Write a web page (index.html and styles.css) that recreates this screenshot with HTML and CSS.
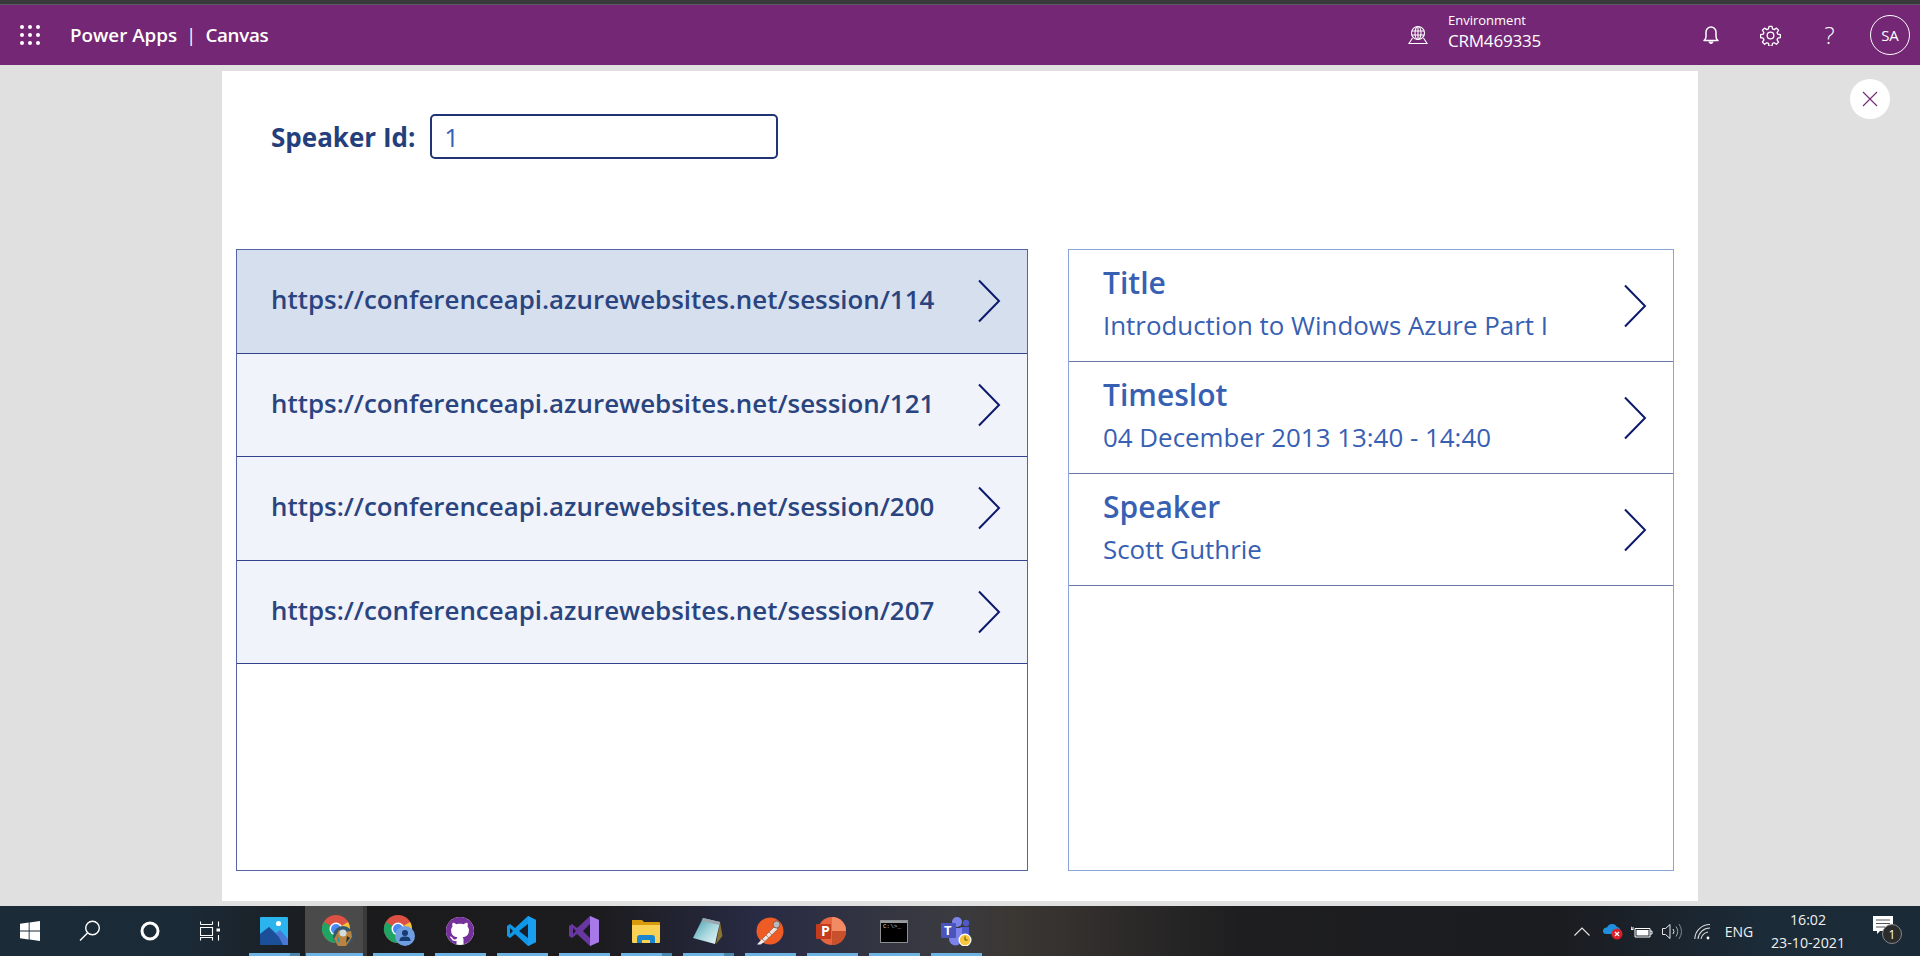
FILE: index.html
```html
<!DOCTYPE html>
<html lang="en">
<head>
<meta charset="utf-8">
<title>Power Apps | Canvas</title>
<link rel="stylesheet" href="styles.css">
</head>
<body>
<div class="app">
  <div class="chrome-strip"></div>
  <header class="topbar">
    <svg class="waffle" viewBox="0 0 20 20" width="20" height="20"><g fill="#fff"><circle cx="2" cy="2" r="2"/><circle cx="10" cy="2" r="2"/><circle cx="18" cy="2" r="2"/><circle cx="2" cy="10" r="2"/><circle cx="10" cy="10" r="2"/><circle cx="18" cy="10" r="2"/><circle cx="2" cy="18" r="2"/><circle cx="10" cy="18" r="2"/><circle cx="18" cy="18" r="2"/></g></svg>
    <div class="brand"><span>Power Apps</span><span class="brand-sep">|</span><span class="brand-sub">Canvas</span></div>
    <div class="env">
      <svg class="env-icon" viewBox="0 0 20 20" width="20" height="20" fill="none" stroke="#fff" stroke-width="1.1"><circle cx="10" cy="8" r="6.5"/><ellipse cx="10" cy="8" rx="3" ry="6.5"/><path d="M3.5 6h13M3.5 10h13M10 1.500v13"/><path d="M4.500 13 1 18.500h18L15.500 13"/></svg>
      <div class="env-text"><div class="env-label">Environment</div><div class="env-name">CRM469335</div></div>
    </div>
    <div class="top-icons">
      <svg class="bell" viewBox="0 0 20 22" width="20" height="22" fill="none" stroke="#fff" stroke-width="1.5"><path d="M3 16.500c1.500-1 2-2 2-4V8a5 5 0 0 1 10 0v4.500c0 2 .5 3 2 4z" stroke-linejoin="round"/><path d="M8 17.500a2 2 0 0 0 4 0" fill="#fff" stroke-width="1"/></svg>
      <svg viewBox="0 0 24 24" width="21" height="21" fill="none" stroke="#fff" stroke-width="1.500"><path d="M10.300 1.500h3.400l.6 3 1.900.8 2.600-1.700 2.400 2.400-1.700 2.600.8 1.900 3 .6v3.400l-3 .6-.8 1.900 1.700 2.600-2.400 2.400-2.600-1.700-1.900.8-.6 3h-3.400l-.6-3-1.900-.8-2.600 1.700-2.400-2.400 1.700-2.600-.8-1.900-3-.6v-3.400l3-.6.8-1.900-1.700-2.600 2.400-2.400 2.600 1.700 1.900-.8z" stroke-linejoin="round"/><circle cx="12" cy="12" r="3.800"/></svg>
      <span class="help">?</span>
      <span class="avatar">SA</span>
    </div>
  </header>
  <main class="stage">
    <section class="card">
      <div class="form-row">
        <label class="field-label">Speaker Id:</label>
        <div class="field-input">1</div>
      </div>
      <div class="panels">
        <div class="list">
          <div class="list-row selected"><span class="url">https://conferenceapi.azurewebsites.net/session/114</span><svg class="chev" viewBox="0 0 24 44" width="24" height="44"><path d="M2 1.500 22 22 2 42.500"/></svg></div>
          <div class="list-row"><span class="url">https://conferenceapi.azurewebsites.net/session/121</span><svg class="chev" viewBox="0 0 24 44" width="24" height="44"><path d="M2 1.500 22 22 2 42.500"/></svg></div>
          <div class="list-row"><span class="url">https://conferenceapi.azurewebsites.net/session/200</span><svg class="chev" viewBox="0 0 24 44" width="24" height="44"><path d="M2 1.500 22 22 2 42.500"/></svg></div>
          <div class="list-row"><span class="url">https://conferenceapi.azurewebsites.net/session/207</span><svg class="chev" viewBox="0 0 24 44" width="24" height="44"><path d="M2 1.500 22 22 2 42.500"/></svg></div>
        </div>
        <div class="detail">
          <div class="detail-row"><div class="detail-text"><div class="detail-title">Title</div><div class="detail-value">Introduction to Windows Azure Part I</div></div><svg class="chev" viewBox="0 0 24 44" width="24" height="44"><path d="M2 1.500 22 22 2 42.500"/></svg></div>
          <div class="detail-row"><div class="detail-text"><div class="detail-title">Timeslot</div><div class="detail-value">04 December 2013 13:40 - 14:40</div></div><svg class="chev" viewBox="0 0 24 44" width="24" height="44"><path d="M2 1.500 22 22 2 42.500"/></svg></div>
          <div class="detail-row"><div class="detail-text"><div class="detail-title">Speaker</div><div class="detail-value">Scott Guthrie</div></div><svg class="chev" viewBox="0 0 24 44" width="24" height="44"><path d="M2 1.500 22 22 2 42.500"/></svg></div>
        </div>
      </div>
    </section>
    <button class="close" aria-label="Close"><svg viewBox="0 0 16 16" width="16" height="16" fill="none" stroke="#742774" stroke-width="1.100"><path d="M1 1l14 14M15 1 1 15"/></svg></button>
  </main>
  <footer class="taskbar">
    <div class="tb-sys">
      <div class="sys"><svg viewBox="0 0 20 20" width="20" height="20" fill="#fff"><path d="M0 2.800 8.700 1.600v8H0zM9.600 1.500 20 0v9.600H9.600zM0 10.500h8.700v8L0 17.200zM9.600 10.500H20V20L9.600 18.500z"/></svg></div>
      <div class="sys"><svg viewBox="0 0 22 22" width="22" height="22" fill="none" stroke="#fff" stroke-width="1.400"><circle cx="13.500" cy="8" r="6.800"/><path d="M8.500 13 1 20.500"/></svg></div>
      <div class="sys"><svg viewBox="0 0 20 20" width="20" height="20" fill="none" stroke="#fff" stroke-width="3"><circle cx="10" cy="10" r="8"/></svg></div>
      <div class="sys"><svg viewBox="0 0 20 20" width="20" height="20" fill="none" stroke="#fff" stroke-width="1.100"><path d="M.5 3.500V.5M12.500.5v3M.5 3.500h12M.5 6.500h12v8H.5zM.5 19.500v-3h12v3M18.500.5v5M18.500 14v5.500"/><rect x="16.500" y="7.500" width="4" height="3" fill="#fff" stroke="none"/></svg></div>
    </div>
    <div class="tb-apps">
      <div class="app-item stacked"><svg viewBox="0 0 28 28" width="28" height="28"><rect width="28" height="28" rx="1" fill="#2bb3ee"/><circle cx="18.500" cy="6.500" r="2.600" fill="#fff"/><path d="M0 28V17l9-7 7 6 4-3 8 9v6z" fill="#4a78d6"/><path d="M0 28V17l9-7 10 10 4 8z" fill="#1b4f97"/></svg></div>
      <div class="app-item active stacked"><svg viewBox="-4 -2 36 36" width="36" height="36"><circle cx="14" cy="14" r="14" fill="#dd5144"/><path d="M14 14 26.100 7A14 14 0 0 1 16 27.900z" fill="#f5c33b"/><path d="M14 14 16 27.900A14 14 0 0 1 1.900 7z" fill="#1fa463"/><circle cx="14" cy="14" r="6.500" fill="#fff"/><circle cx="14" cy="14" r="5" fill="#4a8af4"/><circle cx="21" cy="21" r="10" fill="#35586e"/><path d="M12 24l5-9 6 2 6-1 1 6-6 9-8 0z" fill="#b8843f"/><circle cx="21" cy="18" r="3.500" fill="#d3dcdf"/><path d="M15 20l3 5-2 3z" fill="#2b8fb8"/><path d="M25 21l3 2-4 5z" fill="#22313a"/></svg></div>
      <div class="app-item"><svg viewBox="-4 -2 36 36" width="36" height="36"><circle cx="14" cy="14" r="14" fill="#dd5144"/><path d="M14 14 26.100 7A14 14 0 0 1 16 27.900z" fill="#f5c33b"/><path d="M14 14 16 27.900A14 14 0 0 1 1.900 7z" fill="#1fa463"/><circle cx="14" cy="14" r="6.500" fill="#fff"/><circle cx="14" cy="14" r="5" fill="#4a8af4"/><circle cx="21" cy="21" r="10" fill="#6f9fe0"/><circle cx="21" cy="18" r="3" fill="#173b73"/><path d="M15.500 26c0-3.500 2-4.500 5.500-4.500s5.500 1 5.500 4.500z" fill="#173b73"/></svg></div>
      <div class="app-item"><svg viewBox="0 0 16 16" width="28" height="28"><circle cx="8" cy="8" r="8" fill="#fff"/><path fill="#76309b" d="M8 0C3.580 0 0 3.580 0 8c0 3.540 2.290 6.530 5.470 7.590.4.070.55-.17.55-.38 0-.19-.01-.82-.01-1.490-2.010.37-2.530-.49-2.690-.94-.09-.23-.48-.94-.82-1.130-.28-.15-.68-.52-.01-.53.63-.01 1.080.58 1.230.82.72 1.210 1.870.87 2.330.66.070-.52.28-.87.51-1.070-1.780-.2-3.640-.89-3.640-3.950 0-.87.31-1.590.82-2.150-.08-.2-.36-1.020.08-2.120 0 0 .67-.21 2.200.82.64-.18 1.320-.27 2-.27.68 0 1.360.09 2 .27 1.530-1.040 2.200-.82 2.200-.82.44 1.100.16 1.920.08 2.120.51.56.82 1.270.82 2.150 0 3.070-1.870 3.750-3.650 3.950.29.25.54.73.54 1.480 0 1.070-.01 1.930-.01 2.200 0 .21.15.46.55.38A8.013 8.013 0 0 0 16 8c0-4.420-3.580-8-8-8z"/></svg></div>
      <div class="app-item"><svg viewBox="0 0 30 30" width="30" height="30"><path d="M21 0l8 4v22l-8 4L8 18l-5 4-3-2V10l3-2 5 4z" fill="#0f97e8"/><path d="M21 8v14l-9-7z" fill="#17202b"/><path d="M3 12v6l3-3z" fill="#17202b"/><path d="M21 0l8 4v22l-8 4z" fill="#1a9ff0"/><path d="M21 8v14l-6-7z" fill="#17202b"/></svg></div>
      <div class="app-item"><svg viewBox="0 0 30 30" width="30" height="30"><path d="M21 0l9 4v22l-9 4L8 18l-5 4-3-2V10l3-2 5 4z" fill="#68379f"/><path d="M21 0l9 4v22l-9 4z" fill="#a678e8"/><path d="M21 8v14l-7-7z" fill="#1b1b20"/><path d="M4 12v6l3-3z" fill="#1b1b20"/></svg></div>
      <div class="app-item stacked"><svg viewBox="0 0 28 24" width="28" height="24"><path d="M0 1h10l2 2h15a1 1 0 0 1 1 1v3H0z" fill="#d99a0c"/><path d="M0 6h28v17a1 1 0 0 1-1 1H1a1 1 0 0 1-1-1z" fill="#f8d155"/><path d="M5 24v-5q0-3 3-3h12q3 0 3 3v5h-5v-3h-8v3z" fill="#1a86d0"/></svg></div>
      <div class="app-item stacked"><svg viewBox="0 0 30 28" width="30" height="28"><defs><linearGradient id="padFill" x1="0" y1="0" x2="1" y2="1"><stop offset="0" stop-color="#3f97a8"/><stop offset=".55" stop-color="#a9d8df"/><stop offset="1" stop-color="#f2f8f8"/></linearGradient></defs><path d="M27 5l2.500 14-6.500 8z" fill="#8a7430"/><path d="M10 1 27 5 22 27 0 21z" fill="url(#padFill)"/><path d="M10 1 27 5 26.300 8 9 4z" fill="#9aa7ad"/></svg></div>
      <div class="app-item"><svg viewBox="0 0 28 28" width="28" height="28"><circle cx="14" cy="14" r="13.500" fill="#ef5b25"/><path d="M1 27.500 6 22l3 2.500-4.500 3z" fill="#eee"/><path d="M6 22 19 9l3 3L9 24.500z" fill="#e9e4df" stroke="#8a5a48" stroke-width=".7"/><path d="M10 18l3 3M13 15l3 3" stroke="#d77b50" stroke-width="1"/><circle cx="20.500" cy="7.500" r="3.500" fill="#b9b9b9" stroke="#7a4a35" stroke-width=".8"/></svg></div>
      <div class="app-item"><svg viewBox="0 0 32 28" width="32" height="28"><circle cx="16" cy="14" r="14" fill="#e8663f"/><path d="M16 0a14 14 0 0 1 14 14H16z" fill="#f28a63"/><path d="M16 14h14a14 14 0 0 1-14 14z" fill="#c9502c"/><rect x="0" y="7" width="15" height="15" rx="1" fill="#c23c1d"/></svg><span class="ppt-p">P</span></div>
      <div class="app-item"><div class="console"><div class="console-title"></div><div class="console-body">C:\&gt;_</div></div></div>
      <div class="app-item"><svg viewBox="0 0 32 30" width="32" height="30"><circle cx="17" cy="6" r="5" fill="#7b83eb"/><circle cx="26" cy="7" r="3.200" fill="#5059c9"/><path d="M20 11h9v8a4 4 0 0 1-4 4h-5z" fill="#5059c9"/><path d="M9 12h13v11a6 6 0 0 1-13 0z" fill="#7b83eb"/><rect x="1" y="7" width="15" height="15" rx="1" fill="#4b53bc"/><circle cx="25" cy="24" r="6.500" fill="#fff"/><circle cx="25" cy="24" r="5.300" fill="#f8c53c"/><path d="M25 20.500V24h2.500" fill="none" stroke="#5b4a10" stroke-width="1"/></svg><span class="teams-t">T</span></div>
    </div>
    <div class="tray">
      <div class="tray-cell"><svg viewBox="0 0 16 9" width="16" height="9" fill="none" stroke="#e8e8e8" stroke-width="1.100"><path d="M.5 8.500 8 1l7.500 7.500"/></svg></div>
      <div class="tray-cell"><svg viewBox="0 0 21 17" width="21" height="17"><path d="M1 8a3.500 3.500 0 0 1 4-3.500A5.500 5.500 0 0 1 15 4a3.500 3.500 0 0 1 3 5v2H4a3 3 0 0 1-3-3z" fill="#1f8fe0"/><circle cx="15" cy="11" r="5.500" fill="#d8202c"/><path d="M13 9l4 4M17 9l-4 4" stroke="#fff" stroke-width="1.300"/></svg></div>
      <div class="tray-cell"><svg viewBox="0 0 22 13" width="22" height="13" fill="none" stroke="#fff" stroke-width="1"><path d="M4 3.500V12h15V3.500z"/><rect x="5.500" y="5" width="12" height="5.500" fill="#fff" stroke="none"/><path d="M19 6h2v3h-2"/><path d="M0 3h3M0 1.500V4.500h2.500"/></svg></div>
      <div class="tray-cell"><svg viewBox="0 0 21 17" width="21" height="17" fill="none" stroke="#e8e8e8" stroke-width="1"><path d="M.5 5.500h3L8 1.500v14l-4.500-4h-3z"/><path d="M11 6q2 2.500 0 5"/><path d="M14 3.500q3.500 5 0 10" stroke="#9aa3a8"/><path d="M17 1q5 7.500 0 15" stroke="#80888e"/></svg></div>
      <div class="tray-cell wide"><svg viewBox="0 0 17 17" width="17" height="17" fill="none" stroke="#d8d8d8" stroke-width="1.100"><path d="M.8 16A15 15 0 0 1 16 1.500"/><path d="M4 16A12 12 0 0 1 16 5"/><path d="M7 16A9 9 0 0 1 14 9"/><circle cx="14" cy="15" r="1.400" fill="#fff" stroke="none"/></svg></div>
      <span class="tray-lang">ENG</span>
      <div class="tray-clock"><div>16:02</div><div>23-10-2021</div></div>
      <div class="tray-notify-cell"><div class="tray-notify"><svg viewBox="0 0 20 18" width="20" height="18"><path d="M0 0h20v15H7l-3 3v-3H0z" fill="#fff"/><path d="M3 4h14M3 7.500h14M3 11h9" stroke="#555" stroke-width="1"/></svg><span class="notify-badge">1</span></div></div>
    </div>
  </footer>
</div>
</body>
</html>
```
FILE: styles.css
```css
* { box-sizing: border-box; }
html, body { margin: 0; height: 100%; }
body { font-family: "Open Sans", "Noto Sans", sans-serif; overflow: hidden; }
.app { display: flex; flex-direction: column; height: 956px; width: 1920px; }
.chrome-strip { height: 5px; background: #38393b; border-bottom: 1px solid #5c5a5e; }

.topbar { height: 60px; background: #742774; color: #fff; display: flex; align-items: center; }
.waffle { margin-left: 20px; flex: none; }
.brand { margin-left: 30px; font-size: 18.800px; font-weight: 600; display: flex; gap: 9px; }
.brand-sep { font-weight: 400; }
.brand-sub { letter-spacing: -.3px; }
.env { margin-left: auto; margin-right: 119px; display: flex; align-items: center; gap: 20px; }
.env-text { padding-bottom: 6px; }
.env-label { font-size: 13px; line-height: 18px; }
.env-name { font-size: 17px; line-height: 24px; letter-spacing: -.2px; }
.top-icons { width: 260px; display: flex; align-items: center; justify-content: flex-end; gap: 38px; padding-right: 10px; }
.bell { margin-right: 1px; }
.help { font-size: 24px; line-height: 1; font-weight: 300; width: 21px; text-align: center; }
.avatar { width: 40px; height: 40px; border: 1px solid #fff; border-radius: 50%; display: flex; align-items: center; justify-content: center; font-size: 15px; margin-left: -8px; }

.stage { flex: 1; background: #e0e0e0; position: relative; padding: 6px 222px 5px; min-height: 0; display: flex; }
.card { flex: 1; background: #fff; padding: 43px 24px 30px 14px; display: flex; flex-direction: column; }
.form-row { display: flex; align-items: center; height: 45px; padding-left: 35px; gap: 15px; margin-bottom: 90px; flex: none; }
.field-label { font-size: 26px; font-weight: 700; color: #243f7c; }
.field-input { width: 348px; height: 45px; border: 2px solid #1f3474; border-radius: 5px; padding-left: 12px; display: flex; align-items: center; font-size: 26px; color: #3860b2; }
.panels { flex: 1; display: flex; min-height: 0; gap: 40px; }

.list { width: 792px; border: 1px solid #5564a5; }
.list-row { height: 103.600px; background: #f0f3f9; border-bottom: 1px solid #33418f; display: flex; align-items: center; justify-content: space-between; padding: 0 26px 0 34px; font-size: 25.900px; font-weight: 600; color: #2a4480; }
.list-row.selected { background: #d6dfee; }
.url { margin-bottom: 4px; }
.chev { flex: none; fill: none; stroke: #0d1a6b; stroke-width: 2; }

.detail { width: 606px; border: 1px solid #8ea3d8; }
.detail-row { height: 112px; border-bottom: 1px solid #6a78a8; display: flex; align-items: center; justify-content: space-between; padding: 0 26px 0 34px; }
.detail-text { padding-bottom: 4px; }
.detail-title { font-size: 30px; font-weight: 600; color: #3860b2; line-height: 36px; }
.detail-value { font-size: 25.900px; color: #3860b2; line-height: 34px; margin-top: 7px; }

.close { position: absolute; top: 14px; right: 30px; width: 40px; height: 40px; padding: 0; border: 0; border-radius: 50%; background: #fff; display: flex; align-items: center; justify-content: center; }

.taskbar { height: 50px; display: flex; align-items: stretch; background: linear-gradient(90deg, #1b2b38 0, #1b2a37 190px, #1b1b1c 330px, #1c1c1f 600px, #282b44 760px, #3a3b40 950px, #3b3733 1010px, #1e1e20 1240px, #1b1c20 1560px, #1b2b38 1760px, #1a2a37 1920px); }
.tb-sys { display: flex; flex: none; }
.sys { width: 60px; display: flex; align-items: center; justify-content: center; }
.tb-apps { display: flex; margin-left: 3px; }
.app-item { width: 62px; position: relative; display: flex; align-items: center; justify-content: center; }
.app-item::after { content: ""; position: absolute; left: 6px; right: 5px; bottom: 0; height: 3px; background: #6cb3e3; }
.app-item.stacked::before { content: ""; position: absolute; right: 5px; bottom: 0; width: 10px; height: 3px; background: #4d86ad; z-index: 1; }
.app-item.active { background: #4a4a4a; }
.app-item.active::after { left: 1px; right: 0; }
.app-item.active.stacked::before { right: 0; width: 4px; height: 100%; background: #3a3a3a; }
.ppt-p, .teams-t { position: absolute; color: #fff; font-weight: 700; font-size: 14px; line-height: 1; }
.ppt-p { left: 20px; top: 18px; }
.teams-t { left: 19px; top: 18px; font-size: 13px; }
.console { width: 28px; height: 23px; background: #000; border: 1px solid #8d9092; display: flex; flex-direction: column; }
.console-title { height: 2px; background: #9a9da0; flex: none; }
.console-body { color: #c8c8c8; font: 6px/8px "Liberation Mono", monospace; padding-left: 2px; }

.tray { margin-left: auto; display: flex; align-items: center; color: #f0f0f0; padding-right: 10px; }
.tray-cell { width: 30px; display: flex; justify-content: center; flex: none; }
.tray-cell.wide { width: 31px; }
.tray-lang { width: 42px; text-align: center; font-size: 14px; }
.tray-clock { width: 96px; text-align: center; font-size: 14.200px; line-height: 23px; }
.tray-notify-cell { width: 54px; display: flex; justify-content: center; }
.tray-notify { position: relative; width: 20px; height: 24px; margin-top: -6px; }
.notify-badge { position: absolute; left: 9px; top: 8px; width: 20px; height: 20px; border-radius: 50%; background: #2b2b2b; border: 1.500px solid #888; color: #fff; font-size: 12px; display: flex; align-items: center; justify-content: center; }
```
